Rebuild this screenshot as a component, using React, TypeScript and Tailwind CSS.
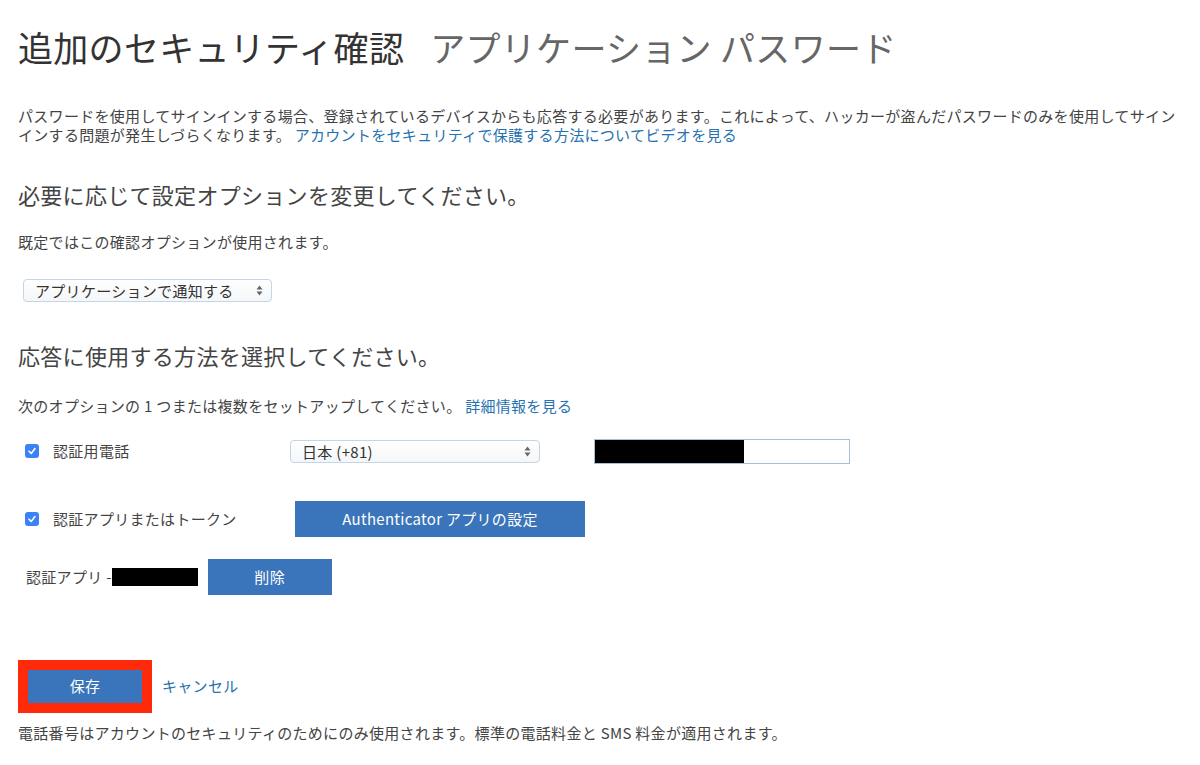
const font = { fontFamily: '"Noto Sans CJK JP", "Noto Sans", sans-serif' };

function Checkbox() {
  return (
    <span className="flex items-center justify-center w-[14px] h-[14px] rounded-[3px] bg-[#3b82f6]">
      <svg width="10" height="10" viewBox="0 0 10 10">
        <path d="M2 5.2 L4.2 7.4 L8 2.6" fill="none" stroke="white" strokeWidth="1.6" strokeLinecap="round" strokeLinejoin="round" />
      </svg>
    </span>
  );
}

function Stepper() {
  return (
    <svg width="7" height="11" viewBox="0 0 7 11">
      <path d="M3.5 0.5 L6.5 4.5 L0.5 4.5 Z" fill="#666" />
      <path d="M3.5 10.5 L6.5 6.5 L0.5 6.5 Z" fill="#666" />
    </svg>
  );
}

function FakeSelect({ label, width }: { label: string; width: string }) {
  return (
    <div
      className={`flex items-center justify-between h-[23px] pl-[11px] pr-[8px] border border-[#c3d6e8] rounded-[4px] bg-gradient-to-b from-white to-[#f4f6f8] text-[15px] text-[#333] ${width}`}
    >
      <span className="leading-none">{label}</span>
      <Stepper />
    </div>
  );
}

export default function App() {
  return (
    <div className="w-[1200px] h-[765px] bg-white text-[#444] px-[18px] pt-[26px] tracking-[0.3px]" style={font}>
      {/* Title */}
      <h1 className="text-[35px] leading-[42px] whitespace-nowrap">
        <span className="text-[#333]">追加のセキュリティ確認</span>
        <span className="text-[#666] ml-[26px]">アプリケーション パスワード</span>
      </h1>

      <p className="mt-[38px] w-[1170px] text-[15px] leading-[19px] text-[#444]">
        パスワードを使用してサインインする場合、登録されているデバイスからも応答する必要があります。これによって、ハッカーが盗んだパスワードのみを使用してサイン
        <br />
        インする問題が発生しづらくなります。{' '}
        <a className="text-[#2672b0]">アカウントをセキュリティで保護する方法についてビデオを見る</a>
      </p>

      <h2 className="mt-[35px] text-[22px] leading-[30px] text-[#444]">必要に応じて設定オプションを変更してください。</h2>

      <p className="mt-[23px] text-[15px] leading-[20px]">既定ではこの確認オプションが使用されます。</p>

      <div className="mt-[27px] ml-[5px]">
        <FakeSelect label="アプリケーションで通知する" width="w-[249px]" />
      </div>

      <h2 className="mt-[38px] text-[22px] leading-[30px] text-[#444]">応答に使用する方法を選択してください。</h2>

      <p className="mt-[26px] text-[15px] leading-[20px]">
        次のオプションの 1 つまたは複数をセットアップしてください。{' '}
        <a className="text-[#2672b0]">詳細情報を見る</a>
      </p>

      {/* Phone row */}
      <div className="mt-[23px] flex items-center h-[24px]">
        <div className="w-[272px] flex items-center pl-[7px] gap-[14px] text-[15px]">
          <Checkbox />
          <span>認証用電話</span>
        </div>
        <FakeSelect label="日本 (+81)" width="w-[250px]" />
        <div className="ml-[54px] w-[256px] h-[25px] border border-[#a9bfd4] bg-white flex">
          <div className="w-[149px] h-full bg-black" />
        </div>
      </div>

      {/* Authenticator row */}
      <div className="mt-[38px] flex items-center h-[36px]">
        <div className="w-[277px] flex items-center pl-[7px] gap-[14px] text-[15px]">
          <Checkbox />
          <span>認証アプリまたはトークン</span>
        </div>
        <button className="w-[290px] h-[36px] bg-[#3a74ba] text-white text-[15px]">Authenticator アプリの設定</button>
      </div>

      <div className="mt-[22px] flex items-center h-[36px] pl-[8px] text-[15px]">
        <span>認証アプリ -</span>
        <div className="w-[86px] h-[18px] bg-black" />
        <button className="ml-[10px] w-[124px] h-[36px] bg-[#3a74ba] text-white text-[15px]">削除</button>
      </div>

      {/* Save */}
      <div className="mt-[65px] flex items-center gap-[10px]">
        <div className="w-[134px] h-[53px] border-[10px] border-[#ff2a0a]">
          <button className="w-full h-full bg-[#3a74ba] text-white text-[15px]">保存</button>
        </div>
        <a className="text-[15px] text-[#2672b0]">キャンセル</a>
      </div>

      <p className="mt-[10px] text-[15px] leading-[20px]">
        電話番号はアカウントのセキュリティのためにのみ使用されます。標準の電話料金と SMS 料金が適用されます。
      </p>
    </div>
  );
}
